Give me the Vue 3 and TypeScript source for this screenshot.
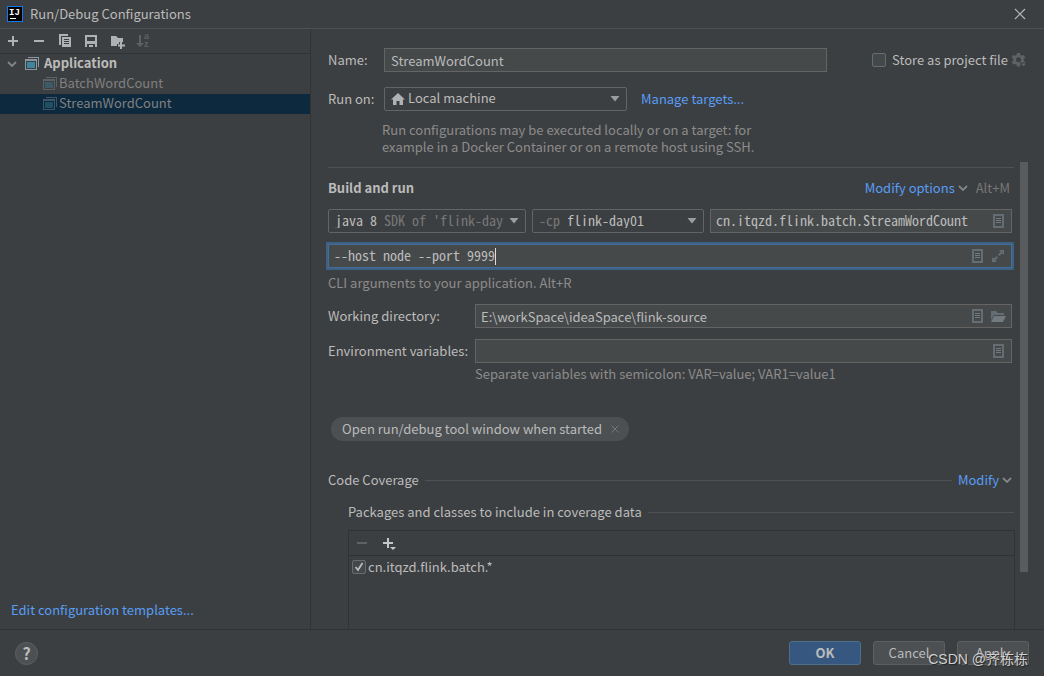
<script setup lang="ts">
import { ref } from 'vue'

interface RunConfig {
  id: number
  name: string
}

const configs: RunConfig[] = [
  { id: 1, name: 'BatchWordCount' },
  { id: 2, name: 'StreamWordCount' },
]
const selectedId = ref(2)
const name = ref('StreamWordCount')
const mainClass = ref('cn.itqzd.flink.batch.StreamWordCount')
const cliArgs = ref('--host node --port 9999')
const workDir = ref('E:\\workSpace\\ideaSpace\\flink-source')
const envVars = ref('')
const storeAsFile = ref(false)
const coverageOn = ref(true)
</script>

<template>
  <div class="dialog">
    <svg class="defs" width="0" height="0" aria-hidden="true">
      <symbol id="i-app" viewBox="0 0 16 16">
        <path d="M4 1h11v10h-1V2H4z" fill="#8a979f" />
        <path d="M1 3h12v11H1zM2 5v8h10V5z" fill="#8a979f" fill-rule="evenodd" />
        <path d="M3 6h8v6H3z" fill="#3e86a0" />
      </symbol>
      <symbol id="i-list" viewBox="0 0 16 16">
        <path d="M3 1h11v14H3zM5 3v10h7V3z" fill="#646d73" fill-rule="evenodd" />
        <path d="M6 5h5v1H6zM6 7h5v1H6zM6 9h5v1H6z" fill="#707a80" />
      </symbol>
      <symbol id="i-drop" viewBox="0 0 10 6">
        <path d="M.5 0h9L5 5.500z" fill="#9a9da0" />
      </symbol>
      <symbol id="i-chev" viewBox="0 0 10 6">
        <path d="M1 1l4 4 4-4" fill="none" stroke="#7f8689" stroke-width="1.800" />
      </symbol>
    </svg>

    <header class="titlebar">
      <svg class="logo" width="16" height="16" viewBox="0 0 16 16" aria-hidden="true">
        <rect x=".5" y=".5" width="15" height="15" fill="#000" stroke="#1478e8" />
        <text x="2" y="9" fill="#fff" font-family="Liberation Mono, monospace" font-size="9" font-weight="700">IJ</text>
        <path d="M3 12h6v1H3z" fill="#fff" />
      </svg>
      <h1>Run/Debug Configurations</h1>
      <button class="icon-btn close" type="button" aria-label="Close">
        <svg width="12" height="12" viewBox="0 0 12 12"><path d="M1 1l10 10M11 1L1 11" stroke="#b4b6b8" stroke-width="1.200" /></svg>
      </button>
    </header>

    <div class="body">
      <aside class="sidebar">
        <div class="toolbar">
          <button class="icon-btn" type="button" aria-label="Add">
            <svg width="16" height="16" viewBox="0 0 16 16"><path d="M7 3h2v4h4v2H9v4H7V9H3V7h4z" fill="#afb1b3" /></svg>
          </button>
          <button class="icon-btn" type="button" aria-label="Remove">
            <svg width="16" height="16" viewBox="0 0 16 16"><path d="M3 7h10v2H3z" fill="#afb1b3" /></svg>
          </button>
          <button class="icon-btn" type="button" aria-label="Copy">
            <svg width="16" height="16" viewBox="0 0 16 16">
              <path d="M2 1h9v2H4v9H2z" fill="#afb1b3" />
              <path d="M5 4h9v10H5zM7 6v1h5V6zM7 8v1h5V8zM7 10v1h5v-1z" fill="#afb1b3" fill-rule="evenodd" />
            </svg>
          </button>
          <button class="icon-btn" type="button" aria-label="Save">
            <svg width="16" height="16" viewBox="0 0 16 16">
              <path d="M2 2h12v12H2zM4 4v4h8V4zM4 11v3h2v-2h4v2h2v-3z" fill="#afb1b3" fill-rule="evenodd" />
              <path d="M7 12h2v2H7z" fill="#afb1b3" />
            </svg>
          </button>
          <button class="icon-btn" type="button" aria-label="New folder">
            <svg width="16" height="16" viewBox="0 0 16 16">
              <path d="M2 3h5l2 2h5v4h-4v2H8v2H2z" fill="#afb1b3" />
              <path d="M11 9h2v2.500h3v2h-3V16h-2v-2.500H9v-2h2z" fill="#afb1b3" />
            </svg>
          </button>
          <button class="icon-btn" type="button" aria-label="Sort" disabled>
            <svg width="16" height="16" viewBox="0 0 16 16">
              <path d="M4 2h2v8h3l-4 4-4-4h3z" fill="#5f6264" />
              <text x="9" y="6" fill="#5f6264" font-family="Liberation Sans, sans-serif" font-size="9" font-weight="700">a</text>
              <text x="9" y="14" fill="#5f6264" font-family="Liberation Sans, sans-serif" font-size="9" font-weight="700">z</text>
            </svg>
          </button>
        </div>
        <ul class="tree">
          <li class="node root">
            <svg class="twist" width="10" height="6"><use href="#i-chev" /></svg>
            <svg width="16" height="16"><use href="#i-app" /></svg>
            <span>Application</span>
          </li>
          <li
            v-for="c in configs"
            :key="c.id"
            class="node leaf"
            :class="{ selected: c.id === selectedId }"
            @click="selectedId = c.id"
          >
            <svg width="16" height="16"><use href="#i-app" /></svg>
            <span>{{ c.name }}</span>
          </li>
        </ul>
        <a class="templates" href="#">Edit configuration templates...</a>
      </aside>

      <main class="main">
        <section class="head">
          <div class="row">
            <label class="head-label" for="cfg-name">Name:</label>
            <input id="cfg-name" v-model="name" class="field name" type="text" />
            <label class="store">
              <input v-model="storeAsFile" class="check" type="checkbox" />
              <span>Store as project file</span>
            </label>
            <svg class="gear" width="16" height="16" viewBox="0 0 16 16" aria-hidden="true">
              <path d="M6 1h3l.5 2 1.300.7 2-.6 1.500 2.500-1.500 1.400v1.400L14.300 10l-1.500 2.500-2-.6-1.300.7-.5 2H6l-.5-2-1.300-.7-2 .6L.7 10l1.500-1.500V7L.7 5.600l1.500-2.500 2 .6L5.500 3zM7.500 5.200a2.500 2.500 0 1 0 0 5 2.500 2.500 0 0 0 0-5z" fill="#5f6264" fill-rule="evenodd" />
              <path d="M9 11h7l-3.500 4z" fill="#5f6264" stroke="#3c3f41" />
            </svg>
          </div>
          <div class="row">
            <label class="head-label" for="run-on">Run on:</label>
            <div class="combo run-on">
              <svg class="home" width="14" height="14" viewBox="0 0 14 14" aria-hidden="true">
                <path d="M7 1l7 6.500h-2V13H8.500V9h-3v4H2V7.500H0z" fill="#afb1b3" />
              </svg>
              <select id="run-on"><option>Local machine</option></select>
              <svg class="arrow" width="10" height="6"><use href="#i-drop" /></svg>
            </div>
            <a class="manage" href="#">Manage targets...</a>
          </div>
          <p class="hint head-hint">Run configurations may be executed locally or on a target: for<br />example in a Docker Container or on a remote host using SSH.</p>
        </section>

        <section class="scroll">
          <div class="build-head">
            <h2>Build and run</h2>
            <a class="menu-link" href="#">Modify options <svg width="10" height="6"><use href="#i-chev" /></svg></a>
            <span class="shortcut">Alt+M</span>
          </div>
          <div class="inset">
            <div class="build-row">
              <div class="combo mono jdk">
                <select aria-label="JDK"><option>java 8</option></select>
                <span class="sdk">SDK of 'flink-day</span>
                <svg class="arrow" width="10" height="6"><use href="#i-drop" /></svg>
              </div>
              <div class="combo mono cp">
                <span class="prefix">-cp</span>
                <select aria-label="Classpath module"><option>flink-day01</option></select>
                <svg class="arrow" width="10" height="6"><use href="#i-drop" /></svg>
              </div>
              <div class="field box mono grow">
                <input v-model="mainClass" type="text" aria-label="Main class" />
                <svg width="16" height="16"><use href="#i-list" /></svg>
              </div>
            </div>
            <div class="field box mono cli">
              <input id="cli" v-model="cliArgs" type="text" aria-label="CLI arguments" />
              <i class="caret"></i>
              <svg width="16" height="16"><use href="#i-list" /></svg>
              <svg width="16" height="16" viewBox="0 0 16 16" aria-hidden="true">
                <path d="M9 2h5v5l-1.700-1.700L9.500 8 8 6.500l2.700-2.800zM7 14H2V9l1.700 1.700L6.500 8 8 9.500l-2.700 2.800z" fill="#646d73" />
              </svg>
            </div>
            <label class="hint cli-hint" for="cli">CLI arguments to your application. Alt+R</label>
            <div class="form">
              <label for="workdir">Working directory:</label>
              <div class="field box">
                <input id="workdir" v-model="workDir" type="text" />
                <svg width="16" height="16"><use href="#i-list" /></svg>
                <svg width="16" height="16" viewBox="0 0 16 16" aria-hidden="true">
                  <path d="M1 3h5l2 2h6v2H4l-3 5z" fill="#646d73" />
                  <path d="M4 8h12l-3 6H1z" fill="#707a80" />
                </svg>
              </div>
              <label for="env">Environment variables:</label>
              <div class="field box">
                <input id="env" v-model="envVars" type="text" />
                <svg width="16" height="16"><use href="#i-list" /></svg>
              </div>
            </div>
            <p class="hint env-hint">Separate variables with semicolon: VAR=value; VAR1=value1</p>
            <div class="chip">
              <span>Open run/debug tool window when started</span>
              <button class="icon-btn" type="button" aria-label="Remove option">
                <svg width="8" height="8" viewBox="0 0 8 8"><path d="M.5.5l7 7M7.500.5l-7 7" stroke="#74777a" /></svg>
              </button>
            </div>
            <div class="rule-row coverage">
              <span>Code Coverage</span>
              <i class="rule"></i>
              <a class="menu-link" href="#">Modify <svg width="10" height="6"><use href="#i-chev" /></svg></a>
            </div>
          </div>
          <div class="packages">
            <div class="rule-row">
              <span>Packages and classes to include in coverage data</span>
              <i class="rule"></i>
            </div>
            <div class="pack-box">
              <div class="pack-tools">
                <button class="icon-btn" type="button" aria-label="Remove package" disabled>
                  <svg width="16" height="16" viewBox="0 0 16 16"><path d="M3 7h10v2H3z" fill="#5f6264" /></svg>
                </button>
                <button class="icon-btn" type="button" aria-label="Add package">
                  <svg width="16" height="16" viewBox="0 0 16 16">
                    <path d="M7 3h2v4h4v2H9v4H7V9H3V7h4z" fill="#c5c7c9" />
                    <path d="M10 12h6l-3 3z" fill="#c5c7c9" />
                  </svg>
                </button>
              </div>
              <label class="pack-item">
                <input v-model="coverageOn" class="check" type="checkbox" />
                <span>cn.itqzd.flink.batch.*</span>
              </label>
            </div>
          </div>
          <div class="thumb"></div>
        </section>
      </main>
    </div>

    <footer class="footer">
      <button class="help" type="button">?</button>
      <button class="btn primary" type="button">OK</button>
      <button class="btn" type="button">Cancel</button>
      <button class="btn" type="button">Apply</button>
    </footer>
    <div class="watermark">CSDN @齐栋栋</div>
  </div>
</template>

<style>
body {
  margin: 0;
  background: #3c3f41;
}
</style>

<style scoped>
.dialog {
  position: relative;
  display: flex;
  flex-direction: column;
  height: 100vh;
  overflow: hidden;
  background: #3c3f41;
  color: #bbbbbb;
  font: 13px/16px 'Noto Sans CJK SC', 'Noto Sans', sans-serif;
}
.dialog * {
  box-sizing: border-box;
}
.defs {
  position: absolute;
}
svg {
  flex: none;
}
h1,
h2,
p,
ul {
  margin: 0;
  padding: 0;
  font-size: 13px;
}
h1 {
  font-weight: 400;
}
a {
  color: #589df6;
  text-decoration: none;
}
input,
select,
button {
  margin: 0;
  padding: 0;
  border: 0;
  outline: 0;
  background: none;
  color: inherit;
  font: inherit;
}
.icon-btn {
  display: flex;
  align-items: center;
  justify-content: center;
}
.titlebar {
  flex: none;
  display: flex;
  align-items: center;
  gap: 7px;
  height: 29px;
  padding: 0 18px 0 7px;
  border-bottom: 1px solid #515151;
}
.close {
  margin-left: auto;
}
.body {
  flex: 1;
  display: flex;
  min-height: 0;
}
.sidebar {
  flex: none;
  display: flex;
  flex-direction: column;
  width: 311px;
  border-right: 1px solid #323232;
}
.toolbar {
  display: flex;
  height: 25px;
  border-bottom: 1px solid #323232;
}
.toolbar .icon-btn {
  width: 26px;
}
.tree {
  flex: 1;
  list-style: none;
}
.node {
  display: flex;
  align-items: center;
  height: 20px;
}
.node span {
  padding-bottom: 2px;
}
.root {
  gap: 4px;
  padding-left: 7px;
  font-weight: 700;
}
.root .twist {
  margin-right: 3px;
}
.leaf {
  gap: 1px;
  padding-left: 42px;
  color: #808080;
}
.leaf svg {
  opacity: 0.4;
}
.selected {
  background: #0d293e;
}
.templates {
  padding: 0 11px 11px;
}
.main {
  flex: 1;
  display: flex;
  flex-direction: column;
  min-width: 0;
}
.head {
  flex: none;
  height: 133px;
  padding: 19px 17px 0 17px;
}
.row {
  display: flex;
  align-items: center;
  height: 24px;
  margin-bottom: 15px;
}
.head-label {
  flex: none;
  width: 56px;
}
.field {
  height: 24px;
  border: 1px solid #646464;
  background: #45494a;
}
.name {
  width: 443px;
  padding: 0 6px;
}
.store {
  display: flex;
  align-items: center;
  gap: 6px;
  margin-left: auto;
}
.gear {
  margin-left: 3px;
}
.check {
  appearance: none;
  flex: none;
  width: 14px;
  height: 14px;
  border: 1px solid #6b6b6b;
  border-radius: 2px;
  background: #43494a;
}
.check:checked {
  background: #43494a
    url("data:image/svg+xml,%3Csvg xmlns='http://www.w3.org/2000/svg' viewBox='0 0 12 12'%3E%3Cpath d='M2.500 6l2.500 3 4.500-7' fill='none' stroke='%23bbbbbb' stroke-width='1.800'/%3E%3C/svg%3E");
}
.combo {
  position: relative;
  display: flex;
  align-items: center;
  height: 24px;
  border: 1px solid #646464;
  border-radius: 2px;
}
.combo select {
  appearance: none;
  flex: 1;
  min-width: 0;
  height: 22px;
  padding-bottom: 2px;
}
.arrow {
  position: absolute;
  right: 6px;
  pointer-events: none;
}
.run-on {
  width: 243px;
  padding-left: 6px;
}
.home {
  margin-right: 3px;
}
.manage {
  margin-left: 14px;
}
.hint {
  color: #8c8c8c;
}
.head-hint {
  margin: -5px 0 0 54px;
  line-height: 17px;
}
.scroll {
  position: relative;
  flex: 1;
  min-height: 0;
  overflow: hidden;
  padding: 5px 30px 0 17px;
}
.thumb {
  position: absolute;
  top: 0;
  right: 16px;
  width: 8px;
  height: 410px;
  background: #595b5d;
}
.build-head {
  display: flex;
  align-items: center;
  height: 42px;
  padding: 0 4px 2px 0;
  border-top: 1px solid #515151;
}
.menu-link {
  display: flex;
  align-items: center;
  gap: 3px;
}
.build-head .menu-link {
  margin-left: auto;
}
.shortcut {
  margin-left: 8px;
  color: #777777;
}
.inset {
  padding-right: 2px;
}
.build-row {
  display: flex;
  gap: 6px;
}
.mono {
  font-family: 'Noto Sans Mono CJK SC', 'Liberation Mono', monospace;
  font-size: 14px;
}
.jdk {
  width: 198px;
}
.jdk select {
  padding-left: 6px;
}
.sdk {
  position: absolute;
  left: calc(6px + 7ch);
  color: #777777;
  white-space: nowrap;
  pointer-events: none;
}
.cp {
  width: 172px;
  padding-left: 6px;
}
.prefix {
  margin-right: 1ch;
  color: #777777;
}
.grow {
  flex: 1;
}
.box {
  position: relative;
  display: flex;
  align-items: center;
  gap: 5px;
  min-width: 0;
  padding: 0 5px;
}
.box input {
  flex: 1;
  min-width: 0;
  height: 22px;
}
.mono input,
.mono span {
  padding-bottom: 2px;
}
.cli {
  margin-top: 11px;
  border-color: #466d94;
  box-shadow: 0 0 0 2px #3d6185;
}
.cli input {
  caret-color: transparent;
}
.caret {
  position: absolute;
  left: calc(5px + 23ch);
  width: 1px;
  height: 17px;
  background: #dddddd;
}
.cli-hint {
  display: block;
  margin: 7px 0 13px;
}
.form {
  display: grid;
  grid-template-columns: 147px 1fr;
  row-gap: 11px;
  align-items: center;
}
.env-hint {
  margin: 3px 0 0 147px;
}
.chip {
  display: flex;
  align-items: center;
  gap: 9px;
  width: fit-content;
  height: 24px;
  margin: 35px 0 0 3px;
  padding: 0 10px 0 11px;
  border-radius: 12px;
  background: #4c5052;
}
.rule-row {
  display: flex;
  align-items: center;
  gap: 6px;
}
.rule {
  flex: 1;
  height: 1px;
  background: #515151;
}
.coverage {
  margin-top: 31px;
}
.packages {
  padding: 16px 0 0 20px;
}
.pack-box {
  height: 160px;
  margin: 10px -1px 0 0;
  border: 1px solid #323232;
}
.pack-tools {
  display: flex;
  height: 25px;
  border-bottom: 1px solid #323232;
}
.pack-tools .icon-btn {
  width: 26px;
}
.pack-item {
  display: flex;
  align-items: center;
  gap: 2px;
  height: 22px;
  padding-left: 3px;
}
.footer {
  flex: none;
  display: flex;
  align-items: center;
  gap: 12px;
  height: 47px;
  padding: 0 15px;
  border-top: 1px solid #323232;
}
.help {
  width: 23px;
  height: 23px;
  margin-right: auto;
  border: 1px solid #5e6060;
  border-radius: 50%;
  background: #4c5052;
  font-size: 16px;
  font-weight: 700;
}
.btn {
  width: 72px;
  height: 24px;
  border: 1px solid #5e6060;
  border-radius: 3px;
  background: #4c5052;
}
.primary {
  border-color: #4c708c;
  background: #365880;
  font-weight: 700;
}
.watermark {
  position: absolute;
  right: 16px;
  bottom: 7px;
  color: #d0d0d0;
  font: 14px/20px 'Liberation Sans', 'Noto Sans CJK SC', sans-serif;
  text-shadow: 1px 1px 1px #222222;
  pointer-events: none;
}
</style>
